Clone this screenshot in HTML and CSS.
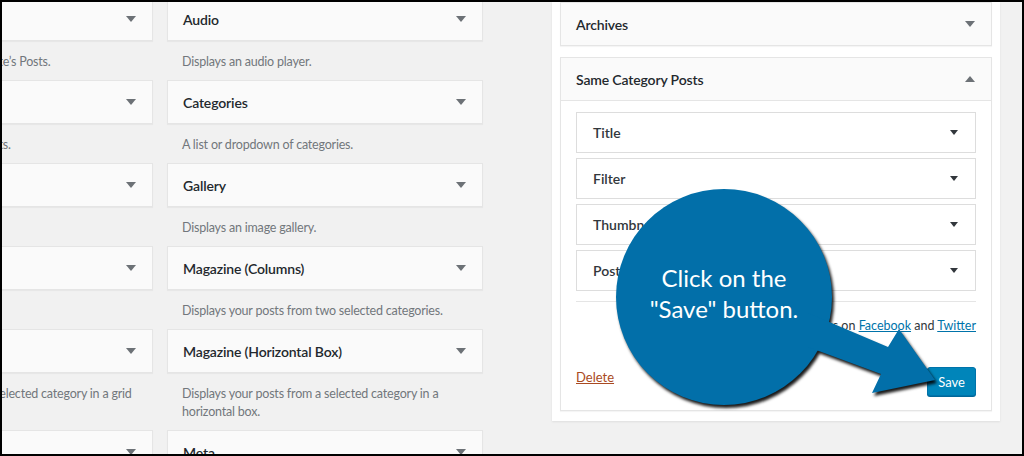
FILE: index.html
```html
<!DOCTYPE html>
<html lang="en">
<head>
  <meta charset="UTF-8">
  <title>Widgets</title>
  <link rel="stylesheet" href="styles.css">
</head>
<body>
  <div class="frame">
    <div class="screen">
      <div class="available">
        <div class="widget">
          <div class="widget-top"><span class="widget-title">Archives</span><span class="caret"></span></div>
          <div class="widget-desc">A monthly archive of your site’s Posts.</div>
        </div>
        <div class="widget">
          <div class="widget-top"><span class="widget-title">Audio</span><span class="caret"></span></div>
          <div class="widget-desc">Displays an audio player.</div>
        </div>
        <div class="widget">
          <div class="widget-top"><span class="widget-title">Calendar</span><span class="caret"></span></div>
          <div class="widget-desc">A calendar of your site’s Posts.</div>
        </div>
        <div class="widget">
          <div class="widget-top"><span class="widget-title">Categories</span><span class="caret"></span></div>
          <div class="widget-desc">A list or dropdown of categories.</div>
        </div>
        <div class="widget">
          <div class="widget-top"><span class="widget-title">Custom HTML</span><span class="caret"></span></div>
          <div class="widget-desc">Arbitrary HTML code.</div>
        </div>
        <div class="widget">
          <div class="widget-top"><span class="widget-title">Gallery</span><span class="caret"></span></div>
          <div class="widget-desc">Displays an image gallery.</div>
        </div>
        <div class="widget">
          <div class="widget-top"><span class="widget-title">Image</span><span class="caret"></span></div>
          <div class="widget-desc">Displays an image.</div>
        </div>
        <div class="widget">
          <div class="widget-top"><span class="widget-title">Magazine (Columns)</span><span class="caret"></span></div>
          <div class="widget-desc">Displays your posts from two selected categories.</div>
        </div>
        <div class="widget">
          <div class="widget-top"><span class="widget-title">Magazine (Grid)</span><span class="caret"></span></div>
          <div class="widget-desc">Displays your posts from a selected category in a grid layout.</div>
        </div>
        <div class="widget">
          <div class="widget-top"><span class="widget-title">Magazine (Horizontal Box)</span><span class="caret"></span></div>
          <div class="widget-desc">Displays your posts from a selected category in a horizontal box.</div>
        </div>
        <div class="widget">
          <div class="widget-top"><span class="widget-title">Magazine (List)</span><span class="caret"></span></div>
          <div class="widget-desc">Displays your posts from a selected category as a list.</div>
        </div>
        <div class="widget">
          <div class="widget-top"><span class="widget-title">Meta</span><span class="caret"></span></div>
          <div class="widget-desc">Login, RSS, &amp; WordPress.org links.</div>
        </div>
      </div>

      <div class="sidebar">
        <div class="sidebar-widget">
          <div class="widget-top"><span class="widget-title">Archives</span><span class="caret"></span></div>
        </div>
        <div class="sidebar-widget">
          <div class="widget-top"><span class="widget-title">Same Category Posts</span><span class="caret up"></span></div>
          <div class="widget-inside">
            <div class="section"><span class="section-title">Title</span><span class="caret small"></span></div>
            <div class="section"><span class="section-title">Filter</span><span class="caret small"></span></div>
            <div class="section"><span class="section-title">Thumbnails</span><span class="caret small"></span></div>
            <div class="section"><span class="section-title">Post details</span><span class="caret small"></span></div>
            <div class="divider"></div>
            <div class="follow">Follow us on <a href="#">Facebook</a> and <a href="#">Twitter</a></div>
            <div class="actions">
              <a href="#" class="delete">Delete</a>
              <button class="save-btn">Save</button>
            </div>
          </div>
        </div>
      </div>
    </div>

    <div class="callout">
      <svg class="callout-shape" width="360" height="240" viewBox="0 0 360 240">
        <circle cx="124" cy="117" r="108" fill="#026fa9"/>
        <polygon points="208,133 288,167 299,149 335,200 272,213 281,194 208,167" fill="#026fa9"/>
      </svg>
      <div class="callout-text">Click on the<br>"Save" button.</div>
    </div>
  </div>
</body>
</html>
```

FILE: styles.css
```css
body {
  margin: 0;
  background: #000;
  font-family: "Segoe UI", Lato, "Liberation Sans", sans-serif;
  color: #23282d;
}
.frame {
  position: relative;
  width: 1024px;
  height: 456px;
  box-sizing: border-box;
  border: 2px solid #000;
  background: #f1f1f1;
  overflow: hidden;
}
.screen {
  display: flex;
  align-items: flex-start;
}
.available {
  flex: none;
  display: grid;
  grid-template-columns: 316px 316px;
  column-gap: 14px;
  margin: -5px 0 0 -165px;
}
.widget-top {
  height: 42px;
  display: flex;
  align-items: center;
  justify-content: space-between;
  padding: 0 16px 0 15px;
  background: #fafafa;
  border: 1px solid #e5e5e5;
  box-shadow: 0 1px 1px rgba(0, 0, 0, 0.04);
}
.widget-title {
  font-size: 14px;
  font-weight: 600;
  letter-spacing: -0.15px;
}
.widget-desc {
  padding: 12px 15px 9px;
  font-size: 12.5px;
  line-height: 18px;
  letter-spacing: -0.2px;
  color: #72777c;
}
.caret {
  width: 0;
  height: 0;
  border-left: 5px solid transparent;
  border-right: 5px solid transparent;
  border-top: 6px solid #6c7176;
}
.caret.up {
  border-top: 0;
  border-bottom: 6px solid #6c7176;
}
.caret.small {
  border-left-width: 4px;
  border-right-width: 4px;
  border-top: 5px solid #32373c;
}

.sidebar {
  flex: none;
  width: 448px;
  box-sizing: border-box;
  margin-left: 69px;
  padding: 0 8px 10px;
  background: #fff;
  box-shadow: 0 1px 2px rgba(0, 0, 0, 0.08);
}
.sidebar-widget {
  border: 1px solid #e5e5e5;
  background: #fff;
  box-shadow: 0 1px 1px rgba(0, 0, 0, 0.04);
}
.sidebar-widget + .sidebar-widget {
  margin-top: 11px;
}
.sidebar-widget .widget-top {
  border: 0;
  box-shadow: none;
}
.widget-inside {
  border-top: 1px solid #e5e5e5;
  padding: 11px 15px 14px;
}
.section {
  height: 39px;
  display: flex;
  align-items: center;
  justify-content: space-between;
  padding: 0 17px 0 16px;
  margin-bottom: 5px;
  border: 1px solid #ddd;
  background: #fff;
}
.section-title {
  font-size: 14px;
  font-weight: 600;
  color: #32373c;
}
.divider {
  margin-top: 10px;
  border-top: 1px solid #e5e5e5;
}
.follow {
  margin-top: 15px;
  text-align: right;
  font-size: 12.5px;
  line-height: 18px;
  color: #32373c;
}
.follow a {
  color: #0073aa;
}
.actions {
  margin-top: 32px;
  display: flex;
  align-items: center;
  justify-content: space-between;
}
.delete {
  margin-bottom: 9px;
  font-size: 13px;
  color: #a94a22;
}
.save-btn {
  height: 29px;
  padding: 0 10px;
  font-family: inherit;
  font-size: 13px;
  color: #fff;
  background: #0085ba;
  border: 1px solid #0073aa;
  border-radius: 3px;
  box-shadow: 0 1px 0 #006799;
}

.callout {
  position: absolute;
  left: 598px;
  top: 178px;
  width: 360px;
  height: 240px;
}
.callout-shape {
  position: absolute;
  left: 0;
  top: 0;
  filter: drop-shadow(2px 3px 1.5px rgba(0, 0, 0, 0.9));
}
.callout-text {
  position: absolute;
  left: 16px;
  top: 9px;
  width: 216px;
  height: 216px;
  box-sizing: border-box;
  padding-bottom: 8px;
  display: flex;
  align-items: center;
  justify-content: center;
  text-align: center;
  font-size: 24px;
  line-height: 31px;
  color: #fff;
}
```
